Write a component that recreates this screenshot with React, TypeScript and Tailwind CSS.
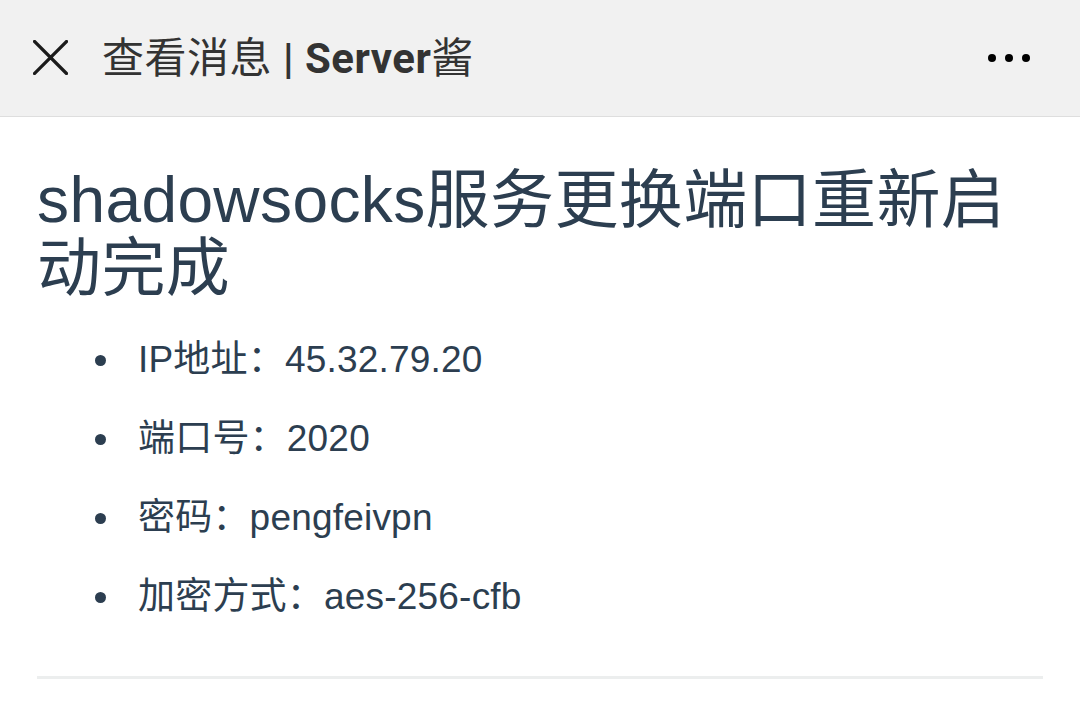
import React from 'react';

const items = [
  { label: 'IP地址：', value: '45.32.79.20' },
  { label: '端口号：', value: '2020' },
  { label: '密码：', value: 'pengfeivpn' },
  { label: '加密方式：', value: 'aes-256-cfb' },
];

export default function App() {
  return (
    <div className="w-[1080px] h-[717px] bg-white overflow-hidden" style={{ fontFamily: '"Liberation Sans", "Noto Sans CJK SC", sans-serif' }}>
      {/* top bar */}
      <div className="h-[117px] bg-[#f1f1f1] border-b border-[#dedede] flex items-center">
        <div className="w-[102px] flex items-center pl-[33px]">
          <svg width="35" height="35" viewBox="0 0 35 35" className="mt-[-2px]">
            <path d="M1.5 1.5 L33.5 33.5 M33.5 1.5 L1.5 33.5" stroke="#1b1b1b" strokeWidth="3.2" strokeLinecap="square" fill="none" />
          </svg>
        </div>
        <div
          className="text-[42px] leading-none text-[#333333] flex-1 mt-[2px] tracking-[0.5px]"
          style={{ fontFamily: 'Roboto, "Noto Sans CJK SC", sans-serif' }}
        >
          <span className="font-normal">查看消息 </span>
          <span className="font-bold">| Server</span>
          <span className="font-normal">酱</span>
        </div>
        <div className="flex items-center gap-[9px] pr-[50px]">
          <span className="w-[8px] h-[8px] rounded-full bg-black" />
          <span className="w-[8px] h-[8px] rounded-full bg-black" />
          <span className="w-[8px] h-[8px] rounded-full bg-black" />
        </div>
      </div>

      {/* content */}
      <div className="px-[37px] pt-[49px]">
        <h1 className="text-[64px] leading-[68px] text-[#2c3e50] font-normal tracking-[0.4px]">
          shadowsocks服务更换端口重新启动完成
        </h1>
        <ul className="mt-[18px] pl-[58px]">
          {items.map((it) => (
            <li key={it.label} className="h-[79px] flex items-center text-[37px] text-[#2c3e50] tracking-[0.2px]">
              <span className="w-[11px] h-[11px] rounded-full bg-[#2c3e50] mr-[32px] mt-[2px]" />
              <span>{it.label}</span>
              <span>{it.value}</span>
            </li>
          ))}
        </ul>
        <div className="mt-[40px] h-[3px] bg-[#eceeee]" />
      </div>
    </div>
  );
}
